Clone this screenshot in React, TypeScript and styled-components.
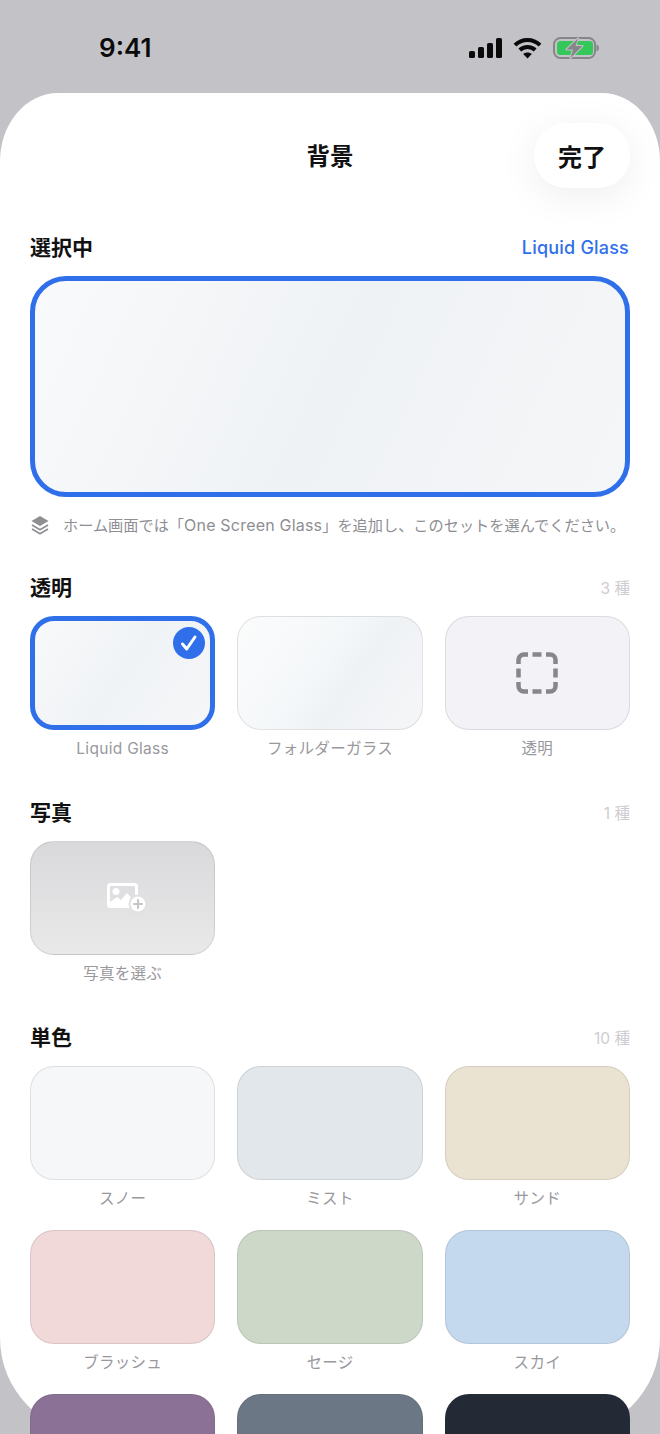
import React from 'react';
import styled, { createGlobalStyle } from 'styled-components';

const BLUE = '#2f6fea';

const GlobalStyle = createGlobalStyle`
  html, body {
    margin: 0;
    padding: 0;
    background: #c3c2c7;
  }
  body {
    width: 660px;
    height: 1434px;
    overflow: hidden;
    font-family: Inter, "Noto Sans CJK JP", sans-serif;
    -webkit-font-smoothing: antialiased;
  }
`;

const Screen = styled.div`
  width: 660px;
  height: 1434px;
  overflow: hidden;
  background: #c3c2c7;
`;

const StatusBar = styled.div`
  height: 93px;
  box-sizing: border-box;
  padding: 0 61px 0 99px;
  display: flex;
  align-items: flex-start;
  justify-content: space-between;
`;

const Time = styled.div`
  margin-top: 32px;
  font-size: 26px;
  line-height: 32px;
  font-weight: 560;
  color: #0a0a0a;
`;

const StatusIcons = styled.div`
  margin-top: 37px;
  display: flex;
  align-items: flex-start;
  gap: 11px;
`;

const Sheet = styled.div`
  height: 1341px;
  box-sizing: border-box;
  padding: 30px 30px 0;
  background: #fff;
  border-radius: 58px 58px 96px 96px / 68px 68px 96px 96px;
`;

const Header = styled.div`
  height: 65px;
  margin-bottom: 46px;
  display: flex;
  align-items: center;
  justify-content: flex-end;
  position: relative;
`;

const Title = styled.h1`
  position: absolute;
  left: 0;
  right: 0;
  margin: 0;
  padding-top: 2px;
  text-align: center;
  font-size: 23.5px;
  line-height: 30px;
  font-weight: 700;
  color: #111;
`;

const DoneButton = styled.button`
  width: 96px;
  height: 65px;
  padding: 0;
  border: none;
  border-radius: 32px;
  background: #fff;
  box-shadow: 0 8px 40px rgba(0, 0, 0, 0.07);
  font-family: inherit;
  font-size: 24px;
  font-weight: 600;
  color: #111;
`;

const SectionHead = styled.div`
  height: 28px;
  margin-bottom: 14px;
  display: flex;
  align-items: center;
  justify-content: space-between;
`;

const SectionTitle = styled.h2`
  margin: 0;
  font-size: 21px;
  line-height: 28px;
  font-weight: 700;
  color: #111;
`;

const SelectedName = styled.span`
  margin: 0 1px 2px 0;
  font-size: 18px;
  font-weight: 500;
  letter-spacing: 0.2px;
  color: ${BLUE};
`;

const Count = styled.span`
  margin-bottom: 2px;
  font-size: 15.5px;
  color: #cdcdd1;
`;

const Preview = styled.div`
  height: 221px;
  box-sizing: border-box;
  border: 5px solid ${BLUE};
  border-radius: 36px;
  background: linear-gradient(115deg, #f9fafb 0%, #eff2f5 50%, #f5f6f8 100%);
`;

const Hint = styled.div`
  height: 20px;
  margin: 18px 0 39px;
  display: flex;
  align-items: center;
  gap: 13px;
  font-size: 15.2px;
  line-height: 20px;
  color: #8e8e93;
  white-space: nowrap;
`;

const HintText = styled.span``;

const LatinRun = styled.span`
  font-size: 16px;
  letter-spacing: 0.2px;
`;

const Section = styled.section`
  margin-bottom: 39px;
`;

const Grid = styled.div`
  display: grid;
  grid-template-columns: repeat(3, 1fr);
  column-gap: 22px;
  row-gap: 20px;
`;

const Option = styled.div`
  display: flex;
  flex-direction: column;
  align-items: center;
  gap: 8px;
`;

const Tile = styled.div<{ $bg: string; $selected?: boolean }>`
  width: 100%;
  height: 114px;
  flex-shrink: 0;
  box-sizing: border-box;
  position: relative;
  display: flex;
  align-items: center;
  justify-content: center;
  border-radius: 24px;
  background: ${(p) => p.$bg};
  border: ${(p) => (p.$selected ? `5px solid ${BLUE}` : '1.5px solid rgba(60, 60, 67, 0.12)')};
`;

const OptionLabel = styled.div`
  font-size: 15.5px;
  line-height: 22px;
  letter-spacing: 0.3px;
  color: #98989d;
`;

const CheckBadge = styled.div`
  position: absolute;
  top: 6px;
  right: 5px;
  width: 32px;
  height: 32px;
  border-radius: 50%;
  background: ${BLUE};
  display: flex;
  align-items: center;
  justify-content: center;
`;

const SignalIcon = () => (
  <svg width="33" height="21" viewBox="0 0 33 21" fill="#0a0a0a" style={{ marginTop: 1 }}>
    <rect x="0" y="13" width="6" height="7" rx="1.6" />
    <rect x="9" y="9" width="6" height="11" rx="1.6" />
    <rect x="18" y="5" width="6" height="15" rx="1.6" />
    <rect x="27" y="0" width="6" height="20" rx="1.6" />
  </svg>
);

const WifiIcon = () => (
  <svg width="29" height="22" viewBox="0 0 29 22" fill="none" stroke="#0a0a0a" strokeWidth="4">
    <path d="M2 8.2C9 1.2 20 1.2 27 8.2" />
    <path d="M6.8 13C11 8.9 18 8.9 22.2 13" />
    <path d="M14.5 21.6l-4.3-4.5c2.3-2 6.3-2 8.6 0z" fill="#0a0a0a" stroke="none" />
  </svg>
);

const BatteryIcon = () => (
  <svg width="46" height="22" viewBox="0 0 46 22">
    <rect x="1" y="1" width="41" height="20" rx="6.5" fill="none" stroke="#85858a" strokeWidth="2" />
    <rect x="4" y="4" width="36" height="14" rx="3.5" fill="#34c759" />
    <path d="M43.5 7.5c1.6.4 2.5 1.8 2.5 3.5s-.9 3.1-2.5 3.5z" fill="#85858a" />
    <path
      d="M25 1.5L13.500 12.500h6.500l-2.500 8.500 12-12h-7z"
      fill="#85858a"
      stroke="#c3c2c7"
      strokeWidth="2"
      strokeLinejoin="round"
      paintOrder="stroke"
    />
  </svg>
);

const LayersIcon = () => (
  <svg width="20" height="20" viewBox="0 0 20 20" fill="none">
    <path d="M10 1l8.500 5L10 11 1.500 6z" fill="#8e8e93" />
    <path d="M2 10l8 4.700 8-4.700" stroke="#8e8e93" strokeWidth="1.600" strokeLinejoin="round" />
    <path d="M2 14l8 4.700 8-4.700" stroke="#8e8e93" strokeWidth="1.600" strokeLinejoin="round" />
  </svg>
);

const CheckIcon = () => (
  <svg width="18" height="18" viewBox="0 0 18 18" fill="none">
    <path
      d="M2.500 10l4.200 5L15 3"
      stroke="#fff"
      strokeWidth="3"
      strokeLinecap="round"
      strokeLinejoin="round"
    />
  </svg>
);

const DashedFrameIcon = () => (
  <svg width="42" height="42" viewBox="0 0 42 42" fill="none" stroke="#86868b" strokeWidth="4.500">
    <path d="M2.500 12V8a5.500 5.500 0 0 1 5.500-5.500h4" />
    <path d="M30 2.500h4a5.500 5.500 0 0 1 5.500 5.500v4" />
    <path d="M39.500 30v4a5.500 5.500 0 0 1-5.500 5.500h-4" />
    <path d="M12 39.500H8A5.500 5.500 0 0 1 2.500 34v-4" />
    <path d="M16.500 2.500h9M16.500 39.500h9M2.500 16.500v9M39.500 16.500v9" />
  </svg>
);

const AddPhotoIcon = () => (
  <svg width="50" height="36" viewBox="-7 0 50 36">
    <rect x="2" y="3" width="31" height="25" rx="3.500" fill="#fff" />
    <rect x="5" y="6" width="25" height="16" rx="1" fill="#dfdfe1" />
    <circle cx="11" cy="11.500" r="3.500" fill="#fff" />
    <path d="M5 22l7-5 4 3 6-7 8 9z" fill="#fff" />
    <circle cx="33" cy="24" r="9.500" fill="#e1e1e3" />
    <circle cx="33" cy="24" r="7.500" fill="#fff" />
    <path d="M33 20v8M29 24h8" stroke="#c4c4c7" strokeWidth="2" strokeLinecap="round" />
  </svg>
);

// the last row runs off the bottom of the screen, so its labels are never seen
const solidColors: { name?: string; color: string }[] = [
  { name: 'スノー', color: '#f6f7f9' },
  { name: 'ミスト', color: '#e2e7eb' },
  { name: 'サンド', color: '#ebe3d1' },
  { name: 'ブラッシュ', color: '#f1d8d9' },
  { name: 'セージ', color: '#cdd8c8' },
  { name: 'スカイ', color: '#c5d9ee' },
  { color: '#8c7196' },
  { color: '#6b7785' },
  { color: '#232a36' },
];

const App: React.FC = () => {
  return (
    <Screen>
      <GlobalStyle />
      <StatusBar>
        <Time>9:41</Time>
        <StatusIcons>
          <SignalIcon />
          <WifiIcon />
          <BatteryIcon />
        </StatusIcons>
      </StatusBar>

      <Sheet>
        <Header>
          <Title>背景</Title>
          <DoneButton>完了</DoneButton>
        </Header>

        <SectionHead>
          <SectionTitle>選択中</SectionTitle>
          <SelectedName>Liquid Glass</SelectedName>
        </SectionHead>
        <Preview />
        <Hint>
          <LayersIcon />
          <HintText>
            ホーム画面では「<LatinRun>One Screen Glass</LatinRun>」を追加し、このセットを選んでください。
          </HintText>
        </Hint>

        <Section>
          <SectionHead>
            <SectionTitle>透明</SectionTitle>
            <Count>3 種</Count>
          </SectionHead>
          <Grid>
            <Option>
              <Tile $selected $bg="linear-gradient(125deg, #f8f9fa 0%, #f0f3f6 50%, #f5f6f8 100%)">
                <CheckBadge>
                  <CheckIcon />
                </CheckBadge>
              </Tile>
              <OptionLabel>Liquid Glass</OptionLabel>
            </Option>
            <Option>
              <Tile $bg="linear-gradient(125deg, #fbfcfc 0%, #f4f7f9 45%, #eff2f5 60%, #f5f6f8 100%)" />
              <OptionLabel>フォルダーガラス</OptionLabel>
            </Option>
            <Option>
              <Tile $bg="#f2f2f7">
                <DashedFrameIcon />
              </Tile>
              <OptionLabel>透明</OptionLabel>
            </Option>
          </Grid>
        </Section>

        <Section>
          <SectionHead>
            <SectionTitle>写真</SectionTitle>
            <Count>1 種</Count>
          </SectionHead>
          <Grid>
            <Option>
              <Tile $bg="linear-gradient(180deg, #d9d9db 0%, #e9e9ea 100%)">
                <AddPhotoIcon />
              </Tile>
              <OptionLabel>写真を選ぶ</OptionLabel>
            </Option>
          </Grid>
        </Section>

        <Section>
          <SectionHead>
            <SectionTitle>単色</SectionTitle>
            <Count>10 種</Count>
          </SectionHead>
          <Grid>
            {solidColors.map((c) => (
              <Option key={c.color}>
                <Tile $bg={c.color} />
                {c.name && <OptionLabel>{c.name}</OptionLabel>}
              </Option>
            ))}
          </Grid>
        </Section>
      </Sheet>
    </Screen>
  );
};

export default App;
